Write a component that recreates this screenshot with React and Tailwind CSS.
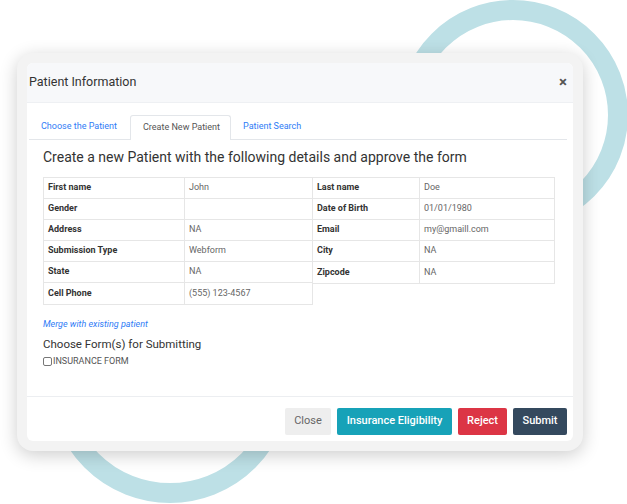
import React from 'react'

const LEFT = [
  ['First name', 'John'],
  ['Gender', ''],
  ['Address', 'NA'],
  ['Submission Type', 'Webform'],
  ['State', 'NA'],
  ['Cell Phone', '(555) 123-4567'],
]

const RIGHT = [
  ['Last name', 'Doe'],
  ['Date of Birth', '01/01/1980'],
  ['Email', 'my@gmaill.com'],
  ['City', 'NA'],
  ['Zipcode', 'NA'],
]

function DetailTable({ rows, labelW, valueW, className = '' }) {
  return (
    <div className={`border border-[#e6e6e6] ${className}`}>
      {rows.map(([label, value], i) => (
        <div
          key={label}
          className={`flex h-[21px] items-center ${i < rows.length - 1 ? 'border-b border-[#e6e6e6]' : ''}`}
        >
          <div className="h-full flex items-center px-1 text-[9px] font-bold text-[#333] border-r border-[#e6e6e6]" style={{ width: labelW }}>
            {label}
          </div>
          <div className="h-full flex items-center px-1 text-[9px] text-[#666]" style={{ width: valueW }}>
            {value}
          </div>
        </div>
      ))}
    </div>
  )
}

export default function App() {
  return (
    <div className="relative w-[627px] h-[504px] overflow-hidden bg-white font-['Roboto',sans-serif]">
      {/* decorative rings */}
      <div className="absolute left-[398px] top-0 w-[230px] h-[230px] rounded-full border-[20px] border-[#bde0e6]" />
      <div className="absolute left-[49px] top-[261px] w-[242px] h-[242px] rounded-full border-[20px] border-[#bde0e6]" />

      {/* card */}
      <div className="relative ml-[17px] mt-[53px] w-[566px] h-[398px] p-[10px] rounded-[16px] bg-[#f3f3f3] shadow-[0_4px_18px_rgba(0,0,0,0.2)]">
        <div className="flex flex-col h-full rounded-[6px] bg-white overflow-hidden">
          {/* header */}
          <div className="flex items-center justify-between h-[40px] pl-[2px] pr-[6px] bg-[#f7f8fa] border-b border-[#eef0f3]">
            <span className="text-[12.5px] text-[#333]">Patient Information</span>
            <span className="text-[15px] font-bold text-[#555] leading-none">×</span>
          </div>

          {/* body */}
          <div className="flex-1 pt-[12px]">
            <div className="flex ml-[2px] mr-[6px] border-b border-[#e3e6ea] h-[25px]">
              <div className="w-[101px] flex items-center pl-3 text-[9px] text-[#2f7cf6]">Choose the Patient</div>
              <div className="w-[101px] flex items-center pl-3 text-[9px] text-[#555] bg-white border border-b-0 border-[#e3e6ea] rounded-t-[3px] -mb-px">
                Create New Patient
              </div>
              <div className="flex items-center pl-3 text-[9px] text-[#2f7cf6]">Patient Search</div>
            </div>

            <div className="pl-[16px]">
              <h2 className="mt-[8px] text-[14px] leading-[18px] text-[#333]">
                Create a new Patient with the following details and approve the form
              </h2>

              <div className="flex items-start mt-[11px]">
                <DetailTable rows={LEFT} labelW={141} valueW={127} />
                <DetailTable rows={RIGHT} labelW={107} valueW={134} className="-ml-px" />
              </div>

              <div className="mt-[13px] text-[9px] italic text-[#2f7cf6]">Merge with existing patient</div>
              <div className="mt-[4px] text-[11.5px] text-[#333]">Choose Form(s) for Submitting</div>
              <div className="flex items-center mt-[2px] gap-[1px]">
                <span className="w-[9px] h-[9px] border border-[#777] rounded-[2px] bg-white" />
                <span className="text-[9px] text-[#555] uppercase">Insurance Form</span>
              </div>
            </div>
          </div>

          {/* footer */}
          <div className="flex justify-end gap-[6px] pt-[11px] pb-[6px] pr-[6px] border-t border-[#eceef1]">
            <button className="h-[27px] w-[46px] rounded-[2px] bg-[#eeeeee] text-[11px] text-[#666]">Close</button>
            <button className="h-[27px] w-[115px] rounded-[2px] bg-[#17a2b8] text-[11px] font-medium text-white">Insurance Eligibility</button>
            <button className="h-[27px] w-[49px] rounded-[2px] bg-[#dc3545] text-[11px] font-medium text-white">Reject</button>
            <button className="h-[27px] w-[54px] rounded-[2px] bg-[#34495e] text-[11px] font-medium text-white">Submit</button>
          </div>
        </div>
      </div>
    </div>
  )
}
